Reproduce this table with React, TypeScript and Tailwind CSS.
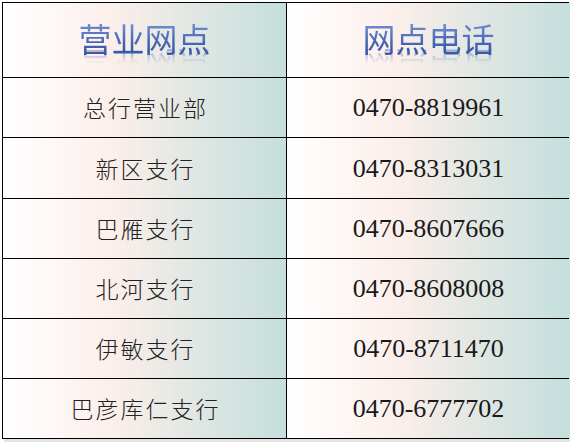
import { Fragment } from "react";

const branches = [
  { name: "总行营业部", phone: "0470-8819961" },
  { name: "新区支行", phone: "0470-8313031" },
  { name: "巴雁支行", phone: "0470-8607666" },
  { name: "北河支行", phone: "0470-8608008" },
  { name: "伊敏支行", phone: "0470-8711470" },
  { name: "巴彦库仁支行", phone: "0470-6777702" },
];

const cell =
  "flex items-center justify-center bg-[linear-gradient(to_right,#ffffff_0%,#fcefeb_38%,#e6e8e4_62%,#c4dfdd_100%)]";

function HeaderText({ children }: { children: string }) {
  return (
    <span className="font-['Noto_Sans_CJK_SC','Noto_Sans',sans-serif] text-[33px] leading-none text-transparent bg-clip-text bg-[linear-gradient(to_bottom,#7393d4_0%,#4567b5_60%,#3656a3_100%)] [-webkit-box-reflect:below_-6px_linear-gradient(transparent_55%,rgba(255,255,255,0.45))]">
      {children}
    </span>
  );
}

export default function App() {
  return (
    <div className="w-[570px] h-[443px] bg-white">
      <div className="ml-[2px] mt-[2px] w-[567px] shadow-[2px_3px_0_#e2e2e2]">
        <div className="grid grid-cols-[283px_283px] grid-rows-[74px_59px_60px_59px_59px_59px_59px] gap-px bg-black p-px">
          <div className={`${cell} pb-1`}>
            <HeaderText>营业网点</HeaderText>
          </div>
          <div className={`${cell} pb-1`}>
            <HeaderText>网点电话</HeaderText>
          </div>
          {branches.map((b) => (
            <Fragment key={b.name}>
              <div className={cell}>
                <span className="font-['Noto_Sans_CJK_SC',sans-serif] font-light text-[23px] tracking-[2px] pl-[2px] text-[#222]">
                  {b.name}
                </span>
              </div>
              <div className={cell}>
                <span className="font-['Liberation_Serif',serif] text-[26px] text-[#1a1a1a]">
                  {b.phone}
                </span>
              </div>
            </Fragment>
          ))}
        </div>
      </div>
    </div>
  );
}
